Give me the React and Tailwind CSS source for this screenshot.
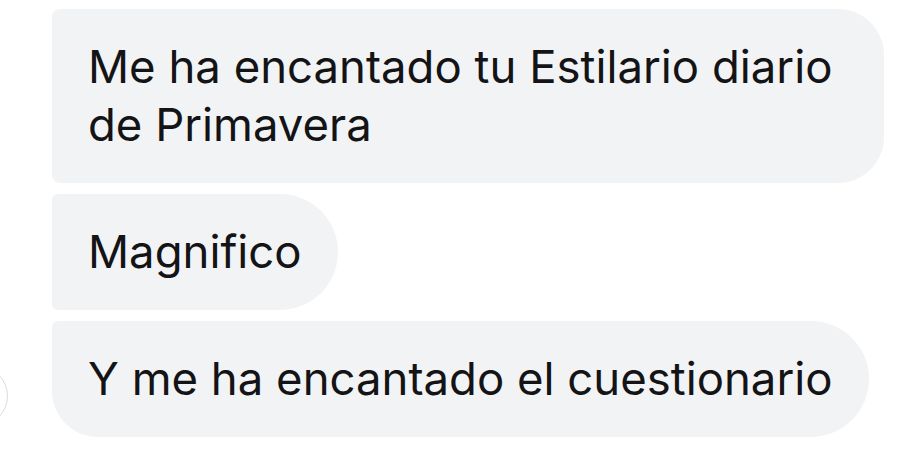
import React from 'react';

const messages = [
  { text: 'Me ha encantado tu Estilario diario de Primavera', shape: 'rounded-l-[8px] rounded-r-[46px]' },
  { text: 'Magnifico', shape: 'rounded-l-[6px] rounded-r-[58px]' },
  { text: 'Y me ha encantado el cuestionario', shape: 'rounded-tl-[6px] rounded-bl-[46px] rounded-r-[58px]', avatar: true },
];

const App = () => {
  return (
    <div className="w-[907px] h-[458px] bg-white overflow-hidden" style={{ fontFamily: 'Inter, "Liberation Sans", sans-serif' }}>
      <div className="flex flex-col items-start gap-[11px] pt-[9px] pl-[52px]">
        {messages.map((m, i) => (
          <div key={i} className="relative">
            {/* edge of the sender's avatar, mostly off screen */}
            {m.avatar && (
              <div className="absolute left-[-104px] top-[45px] w-[60px] h-[60px] rounded-full border border-[#dcdcde]" />
            )}
            <div className={`max-w-[832px] bg-[#f2f3f5] px-[36px] py-[29px] text-[45.5px] leading-[58px] text-[#141416] ${m.shape}`}>
              {m.text}
            </div>
          </div>
        ))}
      </div>
    </div>
  );
};

export default App;
